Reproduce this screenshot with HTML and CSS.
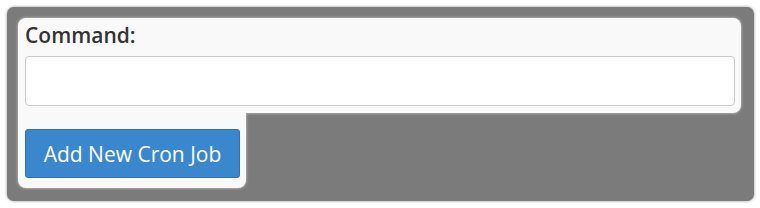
FILE: index.html
```html
<!DOCTYPE html>
<html>
<head>
<meta charset="utf-8">
<title>Cron Jobs</title>
<link rel="stylesheet" href="styles.css">
</head>
<body>
<div class="mask">
	<div class="field">
		<label for="command">Command:</label>
		<input type="text" id="command">
	</div>
	<div class="actions">
		<button class="btn">Add New Cron Job</button>
	</div>
</div>
</body>
</html>
```

FILE: styles.css
```css
body{
	margin:0;
	background:#fff;
	font-family:"Open Sans", "Liberation Sans", sans-serif;
}
.mask{
	margin:7px 6px 7px 7px;
	height:194px;
	box-sizing:border-box;
	padding:11px 13px 11px 11px;
	background:#7b7b7b;
	border-radius:7px;
	box-shadow:0 0 3px rgba(0,0,0,0.45);
}
.field{
	background:#f9f9f9;
	padding:4px 6px 7px 7px;
	border-radius:8px 8px 8px 0;
	box-shadow:0 0 3px rgba(255,255,255,0.7);
	position:relative;
	z-index:1;
}
.field>label{
	display:block;
	font-size:21px;
	font-weight:600;
	line-height:26px;
	color:#333;
	margin-bottom:8px;
}
.field>input{
	display:block;
	width:100%;
	height:50px;
	box-sizing:border-box;
	border:1px solid #ccc;
	border-radius:4px;
	background:#fff;
	margin:0;
}
.actions{
	width:228px;
	box-sizing:border-box;
	background:#f9f9f9;
	padding:16px 6px 10px 7px;
	border-radius:0 0 8px 8px;
	box-shadow:0 0 3px rgba(255,255,255,0.7);
}
.btn{
	display:block;
	width:215px;
	height:49px;
	background:#3a87cd;
	border:1px solid #2e72b4;
	border-radius:3px;
	color:#fff;
	font-family:"Open Sans", "Liberation Sans", sans-serif;
	font-size:21px;
	padding:0;
	cursor:pointer;
}
```
